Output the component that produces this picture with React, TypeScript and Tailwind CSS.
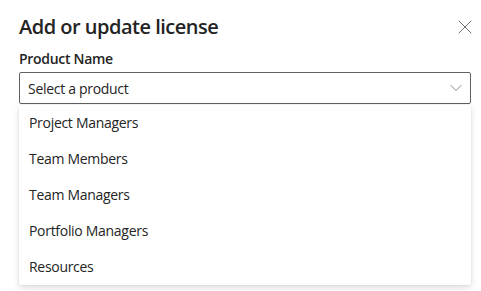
import { X, ChevronDown } from "lucide-react";

const products = [
  "Project Managers",
  "Team Members",
  "Team Managers",
  "Portfolio Managers",
  "Resources",
];

export default function App() {
  return (
    <div
      className="w-[481px] h-[291px] bg-white pl-[19px] pr-[10px] pt-[13px] text-[#242424] tracking-[-0.3px]"
      style={{ fontFamily: '"Open Sans", "Noto Sans", sans-serif' }}
    >
      {/* Header */}
      <div className="flex items-center justify-between h-[28px]">
        <h1 className="text-[20px] leading-[28px] font-semibold tracking-[-0.5px]">Add or update license</h1>
        <button type="button" className="text-[#616161] mr-[-6px]">
          <X className="w-[24px] h-[24px]" strokeWidth={0.9} />
        </button>
      </div>

      {/* Product select */}
      <label className="block mt-[8px] text-[14px] leading-[20px] font-semibold">Product Name</label>
      <div className="mt-[3px] h-[32px] border border-[#616161] rounded-[2px] flex items-center justify-between pl-[8px] pr-[4px]">
        <span className="text-[14px]">Select a product</span>
        <ChevronDown className="w-[20px] h-[20px] text-[#616161]" strokeWidth={0.9} />
      </div>

      {/* Options */}
      <div className="mt-[1px] bg-white rounded-[2px] shadow-[0_3px_7px_rgba(0,0,0,0.13),0_0_2px_rgba(0,0,0,0.11)]">
        {products.map((p) => (
          <div key={p} className="h-[36px] flex items-center pl-[10px] text-[14px] pb-[2px]">
            {p}
          </div>
        ))}
      </div>
    </div>
  );
}
